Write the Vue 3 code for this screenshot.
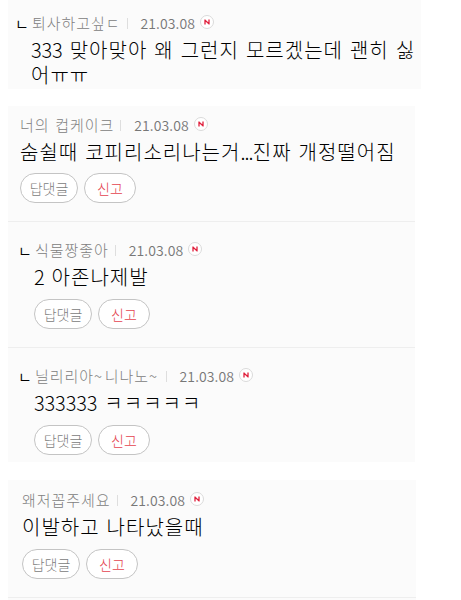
<template>
  <div class="page">
    <section v-for="(grup, g) in gruplar" :key="g" class="panel" :class="'panel-' + grup.ad">
      <article v-for="(yorum, i) in grup.yorumlar" :key="i" class="comment" :class="{ reply: yorum.yanit }">
        <div class="meta">
          <span v-if="yorum.yanit" class="corner">ㄴ</span>
          <span class="name"><span v-for="(p, n) in parcala(yorum.isim)" :key="n" :class="sinif(p)">{{ p }}</span></span>
          <span class="bar"></span>
          <span class="date">21.03.08</span>
          <svg class="new" viewBox="0 0 14 14">
            <circle cx="7" cy="7" r="6.5" fill="#fff" stroke="#dadada" />
            <path d="M5 9.5V4.5M9 9.5V4.5M4.8 5L9.2 9" fill="none" stroke="#e0203c" stroke-width="1.3" />
          </svg>
        </div>
        <p class="text">
          <span v-for="(satir, s) in yorum.metin" :key="s" class="line"><span v-for="(p, n) in parcala(satir)" :key="n" :class="sinif(p)">{{ p }}</span></span>
        </p>
        <div v-if="!yorum.kesik" class="buttons">
          <button class="btn btn-reply">답댓글</button>
          <button class="btn btn-report">신고</button>
        </div>
      </article>
    </section>
  </div>
</template>

<script setup>
// rakam, nokta ve ~ harflerden farklı aralıkla yazılır
const parcala = metin => metin.split(/([0-9]+|\.+|~)/).filter(p => p)
const sinif = p => ({ digits: /^[0-9]/.test(p), dots: p[0] === '.', wide: p === '~' })

const gruplar = [
  {
    ad: 'top',
    yorumlar: [
      { isim: '퇴사하고싶ㄷ', metin: ['333 맞아맞아 왜 그런지 모르겠는데 괜히 싫', '어ㅠㅠ'], yanit: true, kesik: true }
    ]
  },
  {
    ad: 'middle',
    yorumlar: [
      { isim: '너의 컵케이크', metin: ['숨쉴때 코피리소리나는거...진짜 개정떨어짐'] },
      { isim: '식물짱좋아', metin: ['2 아존나제발'], yanit: true },
      { isim: '닐리리아~니나노~', metin: ['333333 ㅋㅋㅋㅋㅋ'], yanit: true }
    ]
  },
  {
    ad: 'bottom',
    yorumlar: [
      { isim: '왜저꼽주세요', metin: ['이발하고 나타났을때'] }
    ]
  }
]
</script>

<style>
body {
  margin: 0; background: #fff;
}
</style>

<style scoped>
.page {
  width: 461px; height: 600px; overflow: hidden;
  font-family: "Noto Sans CJK KR", sans-serif; font-weight: 300;
}

.panel {
  margin-left: 8px; background: #fbfbfb;
}
.panel-top {
  width: 413px; height: 89px; margin-bottom: 17px;
}
.panel-middle {
  width: 407px; height: 356px; margin-bottom: 18px;
}
.panel-bottom {
  width: 408px; height: 120px;
}

.comment {
  box-sizing: border-box; height: 116px; padding: 9px 0 0 12px;
  border-bottom: 1px solid #eee;
}
.comment + .comment {
  height: 126px; padding-top: 18px;
}
.reply {
  padding-left: 26px;
}
.panel-top .comment {
  height: 89px; padding: 13px 0 0 23px; border: 0;
}
.panel-middle .comment:last-child {
  height: 114px; border: 0;
}
.panel-bottom .comment {
  height: 118px; padding: 10px 0 0 14px;
}

.meta {
  display: flex; align-items: center; height: 20px;
  font-size: 15px; line-height: 20px; color: #808080; white-space: nowrap;
}
.corner {
  width: 17px; margin: 2px 0 0 -16px;
  font-size: 15px; font-weight: 350; color: #000;
}
.name {
  letter-spacing: 0.95px; word-spacing: 1.5px;
}
.name .wide {
  letter-spacing: 2.6px;
}
.bar {
  width: 1px; height: 11px; margin: 0 13px 0 6px; background: #dedede;
}
.date {
  font-size: 14px; font-weight: 350; letter-spacing: 0.1px; color: #777;
}
.new {
  width: 14px; height: 14px; margin: -2px 0 0 5px;
}

.text {
  margin: 4px 0 0; font-size: 20px; line-height: 25px;
  letter-spacing: 1px; word-spacing: 1.6px; color: #000; white-space: nowrap;
}
.line {
  display: block;
}
.text .digits {
  letter-spacing: -0.15px;
}
.text .dots {
  letter-spacing: -0.9px;
}

.buttons {
  display: flex; gap: 6px; margin-top: 10px;
}
.panel-middle .comment:first-child .buttons {
  margin-top: 9px;
}
.btn {
  box-sizing: border-box; width: 58px; height: 30px; padding: 0;
  border: 1px solid #c4c4c4; border-radius: 15px; background: #fff;
  font: inherit; font-size: 14px; line-height: 26px; color: #808080;
}
.btn-report {
  width: 52px; color: #e4434f;
}
</style>
